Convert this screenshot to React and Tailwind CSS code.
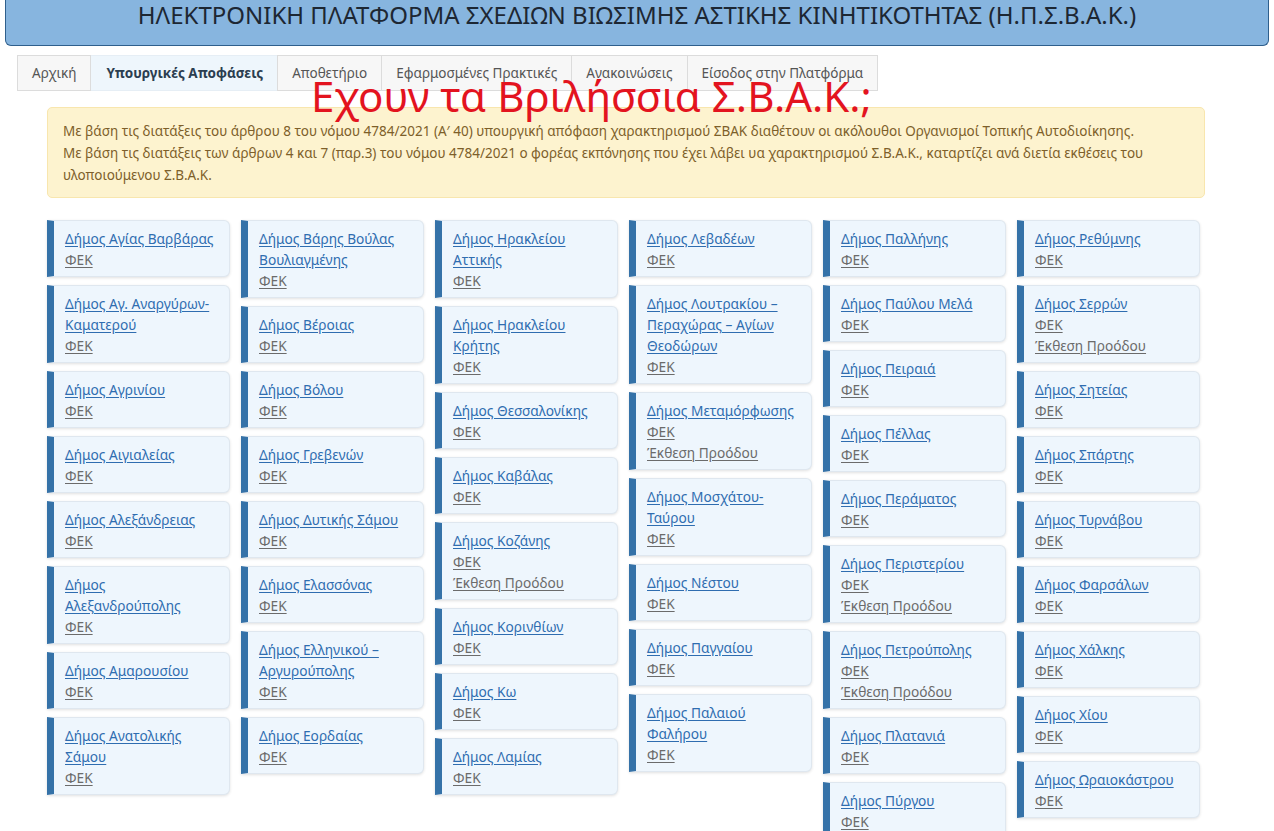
import React from "react";

const columns = [
  [
    { name: ["Δήμος Αγίας Βαρβάρας"] },
    { name: ["Δήμος Αγ. Αναργύρων-", "Καματερού"] },
    { name: ["Δήμος Αγρινίου"] },
    { name: ["Δήμος Αιγιαλείας"] },
    { name: ["Δήμος Αλεξάνδρειας"] },
    { name: ["Δήμος", "Αλεξανδρούπολης"] },
    { name: ["Δήμος Αμαρουσίου"] },
    { name: ["Δήμος Ανατολικής", "Σάμου"] },
  ],
  [
    { name: ["Δήμος Βάρης Βούλας", "Βουλιαγμένης"] },
    { name: ["Δήμος Βέροιας"] },
    { name: ["Δήμος Βόλου"] },
    { name: ["Δήμος Γρεβενών"] },
    { name: ["Δήμος Δυτικής Σάμου"] },
    { name: ["Δήμος Ελασσόνας"] },
    { name: ["Δήμος Ελληνικού –", "Αργυρούπολης"] },
    { name: ["Δήμος Εορδαίας"] },
  ],
  [
    { name: ["Δήμος Ηρακλείου", "Αττικής"] },
    { name: ["Δήμος Ηρακλείου", "Κρήτης"] },
    { name: ["Δήμος Θεσσαλονίκης"] },
    { name: ["Δήμος Καβάλας"] },
    { name: ["Δήμος Κοζάνης"], report: true },
    { name: ["Δήμος Κορινθίων"] },
    { name: ["Δήμος Κω"] },
    { name: ["Δήμος Λαμίας"] },
  ],
  [
    { name: ["Δήμος Λεβαδέων"] },
    { name: ["Δήμος Λουτρακίου –", "Περαχώρας – Αγίων", "Θεοδώρων"] },
    { name: ["Δήμος Μεταμόρφωσης"], report: true },
    { name: ["Δήμος Μοσχάτου-", "Ταύρου"] },
    { name: ["Δήμος Νέστου"] },
    { name: ["Δήμος Παγγαίου"] },
    { name: ["Δήμος Παλαιού", "Φαλήρου"] },
  ],
  [
    { name: ["Δήμος Παλλήνης"] },
    { name: ["Δήμος Παύλου Μελά"] },
    { name: ["Δήμος Πειραιά"] },
    { name: ["Δήμος Πέλλας"] },
    { name: ["Δήμος Περάματος"] },
    { name: ["Δήμος Περιστερίου"], report: true },
    { name: ["Δήμος Πετρούπολης"], report: true },
    { name: ["Δήμος Πλατανιά"] },
    { name: ["Δήμος Πύργου"] },
  ],
  [
    { name: ["Δήμος Ρεθύμνης"] },
    { name: ["Δήμος Σερρών"], report: true },
    { name: ["Δήμος Σητείας"] },
    { name: ["Δήμος Σπάρτης"] },
    { name: ["Δήμος Τυρνάβου"] },
    { name: ["Δήμος Φαρσάλων"] },
    { name: ["Δήμος Χάλκης"] },
    { name: ["Δήμος Χίου"] },
    { name: ["Δήμος Ωραιοκάστρου"] },
  ],
];

const tabs = [
  { label: "Αρχική" },
  { label: "Υπουργικές Αποφάσεις", active: true },
  { label: "Αποθετήριο" },
  { label: "Εφαρμοσμένες Πρακτικές" },
  { label: "Ανακοινώσεις" },
  { label: "Είσοδος στην Πλατφόρμα" },
];

function Card({ item }) {
  return (
    <div className="rounded-r-[6px] border border-l-[7px] border-[#dfe7ef] border-l-[#3572a8] bg-[#eef6fd] pl-[11px] pr-1 pt-[7px] pb-[6px] shadow-[0_1px_3px_rgba(0,0,0,0.12)]">
      <a href="#" className="block text-[#2f6db0] underline underline-offset-2">
        {item.name.map((l, i) => (
          <span key={i} className="block whitespace-nowrap">{l}</span>
        ))}
      </a>
      <a href="#" className="block text-[#6b6b6b] underline underline-offset-2">ΦΕΚ</a>
      {item.report && (
        <a href="#" className="block text-[#6b6b6b] underline underline-offset-2">Έκθεση Προόδου</a>
      )}
    </div>
  );
}

export default function App() {
  return (
    <div className="relative h-[831px] overflow-hidden bg-white font-['Noto_Sans',sans-serif] text-[#333]">
      {/* platform header */}
      <div className="mx-[5px] h-[46px] rounded-b-[6px] border-x-[1.5px] border-b-[1.5px] border-[#2f5f8c] bg-[#87b5df] text-center">
        <h1 className="text-[24px] leading-[30px] font-normal text-[#1d2733]">
          ΗΛΕΚΤΡΟΝΙΚΗ ΠΛΑΤΦΟΡΜΑ ΣΧΕΔΙΩΝ ΒΙΩΣΙΜΗΣ ΑΣΤΙΚΗΣ ΚΙΝΗΤΙΚΟΤΗΤΑΣ (Η.Π.Σ.Β.Α.Κ.)
        </h1>
      </div>

      {/* navigation tabs */}
      <div className="ml-[17px] mt-[9px] flex">
        {tabs.map((t) => (
          <div
            key={t.label}
            className={
              t.active
                ? "h-[36px] border-y border-[#e6eef5] bg-[#eef6fc] px-[15px] text-[13.5px] leading-[34px] font-bold text-[#2b3e50]"
                : "h-[36px] border border-[#dcdcdc] -ml-px first:ml-0 bg-[#f7f7f7] px-[14px] text-[13.5px] leading-[34px] text-[#555]"
            }
          >
            {t.label}
          </div>
        ))}
      </div>

      {/* notice */}
      <div className="mx-[47px] mt-[16px] w-[1158px] rounded-[5px] border border-[#f8e6ae] bg-[#fdf3cf] px-[15px] pt-[12px] pb-[11px] text-[13.5px] leading-[22px] text-[#7d5f2a]">
        <p>
          Με βάση τις διατάξεις του άρθρου 8 του νόμου 4784/2021 (Α′ 40) υπουργική απόφαση χαρακτηρισμού ΣΒΑΚ διαθέτουν οι ακόλουθοι Οργανισμοί Τοπικής Αυτοδιοίκησης.
        </p>
        <p>
          Με βάση τις διατάξεις των άρθρων 4 και 7 (παρ.3) του νόμου 4784/2021 ο φορέας εκπόνησης που έχει λάβει υα χαρακτηρισμού Σ.Β.Α.Κ., καταρτίζει ανά διετία εκθέσεις του
          <br />
          υλοποιούμενου Σ.Β.Α.Κ.
        </p>
      </div>

      {/* municipalities */}
      <div className="ml-[47px] mt-[22px] grid grid-cols-[repeat(6,183px)] gap-x-[11px] items-start text-[13.7px] leading-[21px]">
        {columns.map((col, ci) => (
          <div key={ci} className="flex flex-col gap-[8px]">
            {col.map((item) => (
              <Card key={item.name.join(" ")} item={item} />
            ))}
          </div>
        ))}
      </div>

      {/* overlaid question */}
      <div className="absolute left-[311px] top-[68px] whitespace-nowrap text-[42px] leading-[56px] text-[#e3141f]">
        Εχουν τα Βριλήσσια Σ.Β.Α.Κ.;
      </div>
    </div>
  );
}
